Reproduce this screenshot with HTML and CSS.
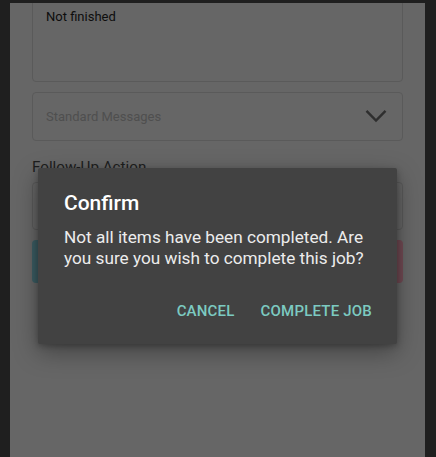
FILE: index.html
```html
<!DOCTYPE html>
<html>
<head>
<meta charset="utf-8">
<link rel="stylesheet" href="styles.css">
</head>
<body>
<div class="page">
  <div class="field textarea"><span class="value">Not finished</span></div>
  <div class="field select">
    <span class="placeholder">Standard Messages</span>
    <svg class="chevron" width="22" height="14" viewBox="0 0 22 14"><path d="M1.5 1.8 L11 11.5 L20.5 1.8" fill="none" stroke="#2e2e2e" stroke-width="2.4"/></svg>
  </div>
  <div class="label">Follow-Up Action</div>
  <div class="field input"></div>
  <div class="actions">
    <div class="btn btn-teal"></div>
    <div class="btn btn-red"></div>
  </div>
</div>
<div class="dialog">
  <div class="dialog-title">Confirm</div>
  <div class="dialog-message">Not all items have been completed. Are you sure you wish to complete this job?</div>
  <div class="dialog-buttons">
    <span class="dialog-btn">CANCEL</span>
    <span class="dialog-btn">COMPLETE JOB</span>
  </div>
</div>
</body>
</html>
```
FILE: styles.css
```css
html, body {
  margin: 0;
  padding: 0;
  height: 100%;
}
body {
  background: #1f1f1f;
  font-family: Roboto, "Noto Sans", sans-serif;
  overflow: hidden;
}
.page {
  margin: 3px 11px 0 10px;
  height: 460px;
  background: #666666;
  padding: 0 22px;
  box-sizing: border-box;
  overflow: hidden;
}
.field {
  border: 1px solid #5a5a5a;
  border-radius: 4px;
  box-sizing: border-box;
}
.textarea {
  margin-top: -11px;
  height: 90px;
  padding: 13px 13px 0;
}
.value {
  font-size: 13px;
  line-height: 16px;
  color: #0d0d0d;
}
.select {
  margin-top: 10px;
  height: 49px;
  display: flex;
  align-items: center;
  justify-content: space-between;
  padding: 0 15px 0 13px;
}
.placeholder {
  font-size: 13px;
  color: #4f4f4f;
}
.chevron {
  display: block;
  margin-top: -1px;
}
.label {
  margin-top: 16px;
  font-size: 15.2px;
  line-height: 20px;
  color: #1e1e1e;
}
.input {
  margin-top: 5px;
  height: 48px;
}
.actions {
  margin-top: 10px;
  display: flex;
  gap: 10px;
}
.btn {
  flex: 1;
  height: 43px;
  border-radius: 4px;
}
.btn-teal { background: #3c5d63; }
.btn-red { background: #714a53; }

.dialog {
  position: absolute;
  left: 38px;
  top: 168px;
  width: 359px;
  box-sizing: border-box;
  background: #424242;
  border-radius: 2px;
  padding: 21px 25px 15px 26px;
  box-shadow: 0 8px 24px rgba(0,0,0,0.35), 0 2px 6px rgba(0,0,0,0.25);
}
.dialog-title {
  font-size: 21px;
  font-weight: 500;
  line-height: 28px;
  color: #ffffff;
}
.dialog-message {
  margin-top: 10px;
  font-size: 17.2px;
  line-height: 21px;
  color: #ececec;
}
.dialog-buttons {
  margin-top: 24px;
  display: flex;
  justify-content: flex-end;
  gap: 26px;
  height: 36px;
  align-items: center;
}
.dialog-btn {
  font-size: 15px;
  font-weight: 500;
  letter-spacing: 0.2px;
  color: #7ccac1;
}
```
